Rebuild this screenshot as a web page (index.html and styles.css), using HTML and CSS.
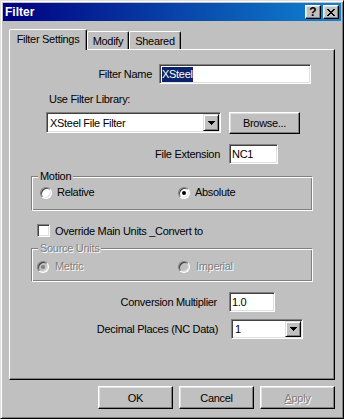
FILE: index.html
```html
<!DOCTYPE html>
<html lang="en">
<head>
    <meta charset="UTF-8">
    <title>Filter</title>
    <link rel="stylesheet" href="styles.css">
</head>
<body>
    <div class="window">
        <div class="titlebar">
            <span class="title">Filter</span>
            <div class="title-buttons">
                <span class="tbtn help">?</span>
                <span class="tbtn close">
                    <svg width="8" height="7" viewBox="0 0 8 7" shape-rendering="crispEdges">
                        <path d="M0 0h2v1H0z M6 0h2v1H6z M1 1h2v1H1z M5 1h2v1H5z M2 2h4v1H2z M3 3h2v1H3z M2 4h4v1H2z M1 5h2v1H1z M5 5h2v1H5z M0 6h2v1H0z M6 6h2v1H6z" fill="#000"/>
                    </svg>
                </span>
            </div>
        </div>

        <div class="client">
            <div class="tabs">
                <div class="tab tab-settings active">Filter Settings</div>
                <div class="tab tab-modify">Modify</div>
                <div class="tab tab-sheared">Sheared</div>
            </div>

            <div class="panel">
                <div class="row row-name">
                    <span class="lbl lbl-name">Filter Name</span>
                    <div class="field field-name"><span class="selected">XSteel</span></div>
                </div>

                <div class="row-library">Use Filter Library:</div>

                <div class="row row-combo">
                    <div class="combo combo-library">
                        <span class="combo-text">XSteel File Filter</span>
                        <span class="drop">
                            <svg width="7" height="4" viewBox="0 0 7 4" shape-rendering="crispEdges">
                                <path d="M0 0h7v1H0z M1 1h5v1H1z M2 2h3v1H2z M3 3h1v1H3z" fill="#000"/>
                            </svg>
                        </span>
                    </div>
                    <button type="button" class="btn btn-browse">Browse...</button>
                </div>

                <div class="row row-ext">
                    <span class="lbl lbl-ext">File Extension</span>
                    <div class="field field-ext">NC1</div>
                </div>

                <div class="group group-motion">
                    <span class="legend">Motion</span>
                    <div class="radios">
                        <span class="radio radio-first"><span class="circle"></span>Relative</span>
                        <span class="radio"><span class="circle checked"></span>Absolute</span>
                    </div>
                </div>

                <div class="row row-check">
                    <span class="checkbox"></span>
                    <span>Override Main Units _Convert to</span>
                </div>

                <div class="group group-source disabled">
                    <span class="legend">Source Units</span>
                    <div class="radios">
                        <span class="radio radio-first"><span class="circle checked"></span>Metric</span>
                        <span class="radio"><span class="circle"></span>Imperial</span>
                    </div>
                </div>

                <div class="row row-mult">
                    <span class="lbl lbl-mult">Conversion Multiplier</span>
                    <div class="field field-mult">1.0</div>
                </div>

                <div class="row row-decimal">
                    <span class="lbl lbl-decimal">Decimal Places (NC Data)</span>
                    <div class="combo combo-decimal">
                        <span class="combo-text">1</span>
                        <span class="drop">
                            <svg width="7" height="4" viewBox="0 0 7 4" shape-rendering="crispEdges">
                                <path d="M0 0h7v1H0z M1 1h5v1H1z M2 2h3v1H2z M3 3h1v1H3z" fill="#000"/>
                            </svg>
                        </span>
                    </div>
                </div>
            </div>

            <div class="buttons">
                <button type="button" class="btn">OK</button>
                <button type="button" class="btn">Cancel</button>
                <button type="button" class="btn btn-disabled"><u>A</u>pply</button>
            </div>
        </div>
    </div>
</body>
</html>
```

FILE: styles.css
```css
body {
    margin: 0;
    background-color: #c0c0c0;
    font-family: "Liberation Sans", Arial, sans-serif;
    font-size: 11px;
    letter-spacing: -0.3px;
    color: #000;
}

.window {
    width: 344px;
    height: 419px;
    box-sizing: border-box;
    background-color: #c0c0c0;
    border: 1px solid;
    border-color: #dfdfdf #000 #000 #dfdfdf;
    box-shadow: inset 1px 1px #fff, inset -1px -1px #808080;
    padding: 2px;
    display: flex;
    flex-direction: column;
}

/* title bar */
.titlebar {
    height: 18px;
    display: flex;
    align-items: center;
    justify-content: space-between;
    padding: 0 2px;
    background: linear-gradient(to right, #000080, #1084d0);
    color: #fff;
    font-weight: bold;
    letter-spacing: 0;
}

.title {
    font-size: 12px;
}

.title-buttons {
    display: flex;
    gap: 2px;
}

.tbtn {
    width: 16px;
    height: 14px;
    box-sizing: border-box;
    background-color: #c0c0c0;
    border: 1px solid;
    border-color: #fff #000 #000 #fff;
    box-shadow: inset -1px -1px #808080, inset 1px 1px #dfdfdf;
    display: flex;
    align-items: center;
    justify-content: center;
    color: #000;
    font-size: 12px;
    line-height: 1;
}

/* client area */
.client {
    flex: 1;
    padding: 8px 6px 0;
    display: flex;
    flex-direction: column;
}

.tabs {
    position: relative;
    z-index: 1;
    height: 20px;
    display: flex;
    align-items: flex-end;
}

.tab {
    height: 18px;
    box-sizing: border-box;
    border: 1px solid;
    border-bottom: none;
    border-color: #fff #000 transparent #fff;
    border-radius: 2px 2px 0 0;
    box-shadow: inset -1px 0 #808080;
    display: flex;
    align-items: center;
    justify-content: center;
}

.tab-settings { width: 78px; }
.tab-modify { width: 42px; }
.tab-sheared { width: 52px; }

.tab.active {
    height: 21px;
    margin-bottom: -1px;
    padding-bottom: 2px;
    background-color: #c0c0c0;
}

.panel {
    height: 331px;
    box-sizing: border-box;
    border: 1px solid;
    border-color: #fff #000 #000 #fff;
    box-shadow: inset -1px -1px #808080;
    display: flex;
    flex-direction: column;
}

.row {
    display: flex;
    align-items: center;
}

.lbl {
    text-align: right;
}

.field {
    height: 20px;
    box-sizing: border-box;
    background-color: #fff;
    border: 1px solid;
    border-color: #808080 #fff #fff #808080;
    box-shadow: inset 1px 1px #404040, inset -1px -1px #dfdfdf;
    padding: 0 2px;
    display: flex;
    align-items: center;
}

.selected {
    background-color: #0a246a;
    color: #fff;
    line-height: 15px;
}

.combo {
    box-sizing: border-box;
    background-color: #fff;
    border: 1px solid;
    border-color: #808080 #fff #fff #808080;
    box-shadow: inset 1px 1px #404040, inset -1px -1px #dfdfdf;
    padding: 1px;
    display: flex;
    align-items: stretch;
}

.combo-text {
    flex: 1;
    padding-left: 2px;
    display: flex;
    align-items: center;
}

.drop {
    width: 16px;
    box-sizing: border-box;
    background-color: #c0c0c0;
    border: 1px solid;
    border-color: #dfdfdf #000 #000 #dfdfdf;
    box-shadow: inset 1px 1px #fff, inset -1px -1px #808080;
    display: flex;
    align-items: center;
    justify-content: center;
}

.btn {
    height: 23px;
    width: 75px;
    box-sizing: border-box;
    padding: 0;
    font-family: inherit;
    font-size: 11px;
    letter-spacing: -0.3px;
    color: #000;
    background-color: #c0c0c0;
    border: 1px solid;
    border-color: #fff #000 #000 #fff;
    box-shadow: inset -1px -1px #808080, inset 1px 1px #dfdfdf;
}

.btn-disabled {
    color: #808080;
    text-shadow: 1px 1px #fff;
}

/* panel rows */
.row-name {
    margin-top: 14px;
}

.lbl-name {
    width: 142px;
    margin-right: 7px;
}

.field-name {
    width: 152px;
}

.row-library {
    margin: 9px 0 0 39px;
    line-height: 13px;
}

.row-combo {
    margin: 6px 0 0 36px;
    align-items: flex-start;
}

.combo-library {
    width: 175px;
    height: 21px;
}

.btn-browse {
    width: 71px;
    height: 22px;
    margin-left: 8px;
}

.row-ext {
    margin-top: 10px;
}

.lbl-ext {
    width: 210px;
    margin-right: 9px;
}

.field-ext {
    width: 49px;
}

/* group boxes */
.group {
    position: relative;
    box-sizing: border-box;
    width: 282px;
    margin-left: 21px;
    border: 1px solid;
    border-color: #808080 #fff #fff #808080;
    box-shadow: inset 1px 1px #fff, inset -1px -1px #808080;
}

.legend {
    position: absolute;
    top: -7px;
    left: 6px;
    padding: 0 2px;
    line-height: 13px;
    background-color: #c0c0c0;
}

.group-motion {
    height: 35px;
    margin-top: 12px;
    padding: 9px 0 0 8px;
}

.group-source {
    height: 34px;
    margin-top: 11px;
    padding: 11px 0 0 5px;
}

.radios {
    display: flex;
    line-height: 13px;
}

.radio {
    display: flex;
    align-items: center;
}

.group-motion .radio-first { width: 138px; }
.group-source .radio-first { width: 141px; }

.circle {
    width: 12px;
    height: 12px;
    box-sizing: border-box;
    border-radius: 50%;
    border: 1px solid;
    border-color: #808080 #fff #fff #808080;
    box-shadow: inset 1px 1px #404040, inset -1px -1px #dfdfdf;
    background-color: #fff;
    margin-right: 5px;
    display: flex;
    align-items: center;
    justify-content: center;
}

.circle.checked::after {
    content: "";
    width: 4px;
    height: 4px;
    border-radius: 50%;
    background-color: #000;
}

.disabled {
    color: #808080;
    text-shadow: 1px 1px #fff;
}

.disabled .circle {
    background-color: #c0c0c0;
    margin-right: 6px;
}

.disabled .circle.checked::after {
    background-color: #808080;
}

.row-check {
    margin: 13px 0 0 27px;
    height: 13px;
}

.checkbox {
    width: 13px;
    height: 13px;
    box-sizing: border-box;
    border: 1px solid;
    border-color: #808080 #fff #fff #808080;
    box-shadow: inset 1px 1px #404040, inset -1px -1px #dfdfdf;
    background-color: #fff;
    margin-right: 5px;
}

.row-mult {
    margin-top: 10px;
}

.lbl-mult {
    width: 207px;
    margin-right: 12px;
}

.field-mult {
    width: 46px;
}

.row-decimal {
    margin-top: 7px;
}

.lbl-decimal {
    width: 208px;
    margin-right: 13px;
}

.combo-decimal {
    width: 72px;
    height: 20px;
}

.buttons {
    margin-top: 6px;
    display: flex;
    justify-content: flex-end;
    gap: 6px;
}
```
